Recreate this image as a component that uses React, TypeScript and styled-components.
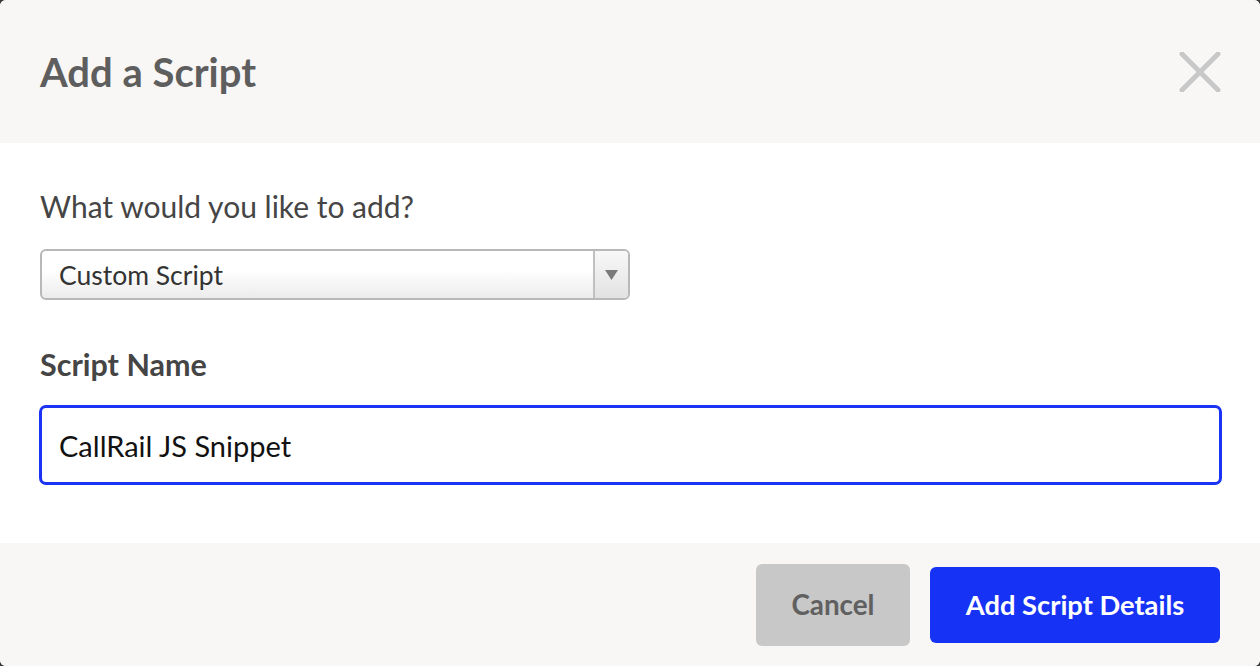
import styled, { createGlobalStyle } from "styled-components";

const GlobalStyle = createGlobalStyle`
    html, body {
        margin: 0;
        padding: 0;
        background: #3a3a3a;
    }
    * {
        box-sizing: border-box;
    }
`;

const Modal = styled.div`
    width: 1260px;
    height: 666px;
    display: flex;
    flex-direction: column;
    background: #ffffff;
    border-radius: 6px;
    overflow: hidden;
    font-family: "Lato", "Open Sans", sans-serif;
`;

const Header = styled.div`
    height: 143px;
    background: #f8f7f5;
    display: flex;
    align-items: center;
    justify-content: space-between;
    padding: 0 38px 0 40px;
`;

const Title = styled.h1`
    margin: 0;
    font-size: 40px;
    font-weight: 700;
    color: #5e5e5e;
`;

const CloseButton = styled.button`
    border: none;
    background: none;
    padding: 0;
    width: 44px;
    height: 44px;
    cursor: pointer;
    display: flex;
    align-items: center;
    justify-content: center;
`;

const Body = styled.div`
    flex: 1;
    padding: 45px 39px 0 40px;
    display: flex;
    flex-direction: column;
`;

const Question = styled.label`
    font-size: 30px;
    color: #454545;
    line-height: 36px;
`;

const SelectBox = styled.div`
    margin-top: 25px;
    width: 590px;
    height: 51px;
    display: flex;
    border: 2px solid #b8b8b8;
    border-radius: 6px;
    background: linear-gradient(#ffffff 0%, #ffffff 40%, #ececec 100%);
    overflow: hidden;
    cursor: pointer;
`;

const SelectValue = styled.div`
    flex: 1;
    display: flex;
    align-items: center;
    padding-left: 17px;
    font-size: 26.5px;
    color: #333333;
`;

const SelectArrow = styled.div`
    width: 35px;
    border-left: 2px solid #c0c0c0;
    display: flex;
    align-items: center;
    justify-content: center;
    background: linear-gradient(#f8f8f8, #e2e2e2);
`;

const FieldLabel = styled.label`
    margin-top: 46px;
    font-size: 30.5px;
    font-weight: 700;
    color: #454545;
    line-height: 36px;
`;

const TextInput = styled.input`
    margin-top: 23px;
    width: 1183px;
    height: 80px;
    margin-left: -1px;
    border: 3px solid #1a33f5;
    border-radius: 7px;
    padding: 0 17px;
    font-family: "Lato", "Open Sans", sans-serif;
    font-size: 29px;
    color: #111111;
    outline: none;
`;

const Footer = styled.div`
    height: 123px;
    background: #f8f7f5;
    display: flex;
    align-items: center;
    justify-content: flex-end;
    gap: 20px;
    padding: 0 40px 0 0;
`;

const Button = styled.button<{ $primary?: boolean }>`
    border: none;
    border-radius: 6px;
    cursor: pointer;
    font-family: "Lato", "Open Sans", sans-serif;
    font-size: ${p => (p.$primary ? "27.3px" : "27.8px")};
    font-weight: 700;
    height: ${p => (p.$primary ? "76px" : "82px")};
    width: ${p => (p.$primary ? "290px" : "154px")};
    background: ${p => (p.$primary ? "#1633f5" : "#c8c8c8")};
    color: ${p => (p.$primary ? "#ffffff" : "#606060")};
`;

export default function App() {
    return (
        <>
            <GlobalStyle />
            <Modal>
                <Header>
                    <Title>Add a Script</Title>
                    <CloseButton aria-label="Close">
                        <svg width="42" height="40" viewBox="0 0 42 40">
                            <path d="M3 2 L39 38 M39 2 L3 38" stroke="#c8c8c8" strokeWidth="5" strokeLinecap="round" />
                        </svg>
                    </CloseButton>
                </Header>
                <Body>
                    <Question>What would you like to add?</Question>
                    <SelectBox>
                        <SelectValue>Custom Script</SelectValue>
                        <SelectArrow>
                            <svg width="13" height="10" viewBox="0 0 13 10">
                                <path d="M0 0 H13 L6.5 10 Z" fill="#7a7a7a" />
                            </svg>
                        </SelectArrow>
                    </SelectBox>
                    <FieldLabel>Script Name</FieldLabel>
                    <TextInput type="text" defaultValue="CallRail JS Snippet" />
                </Body>
                <Footer>
                    <Button>Cancel</Button>
                    <Button $primary>Add Script Details</Button>
                </Footer>
            </Modal>
        </>
    );
}
